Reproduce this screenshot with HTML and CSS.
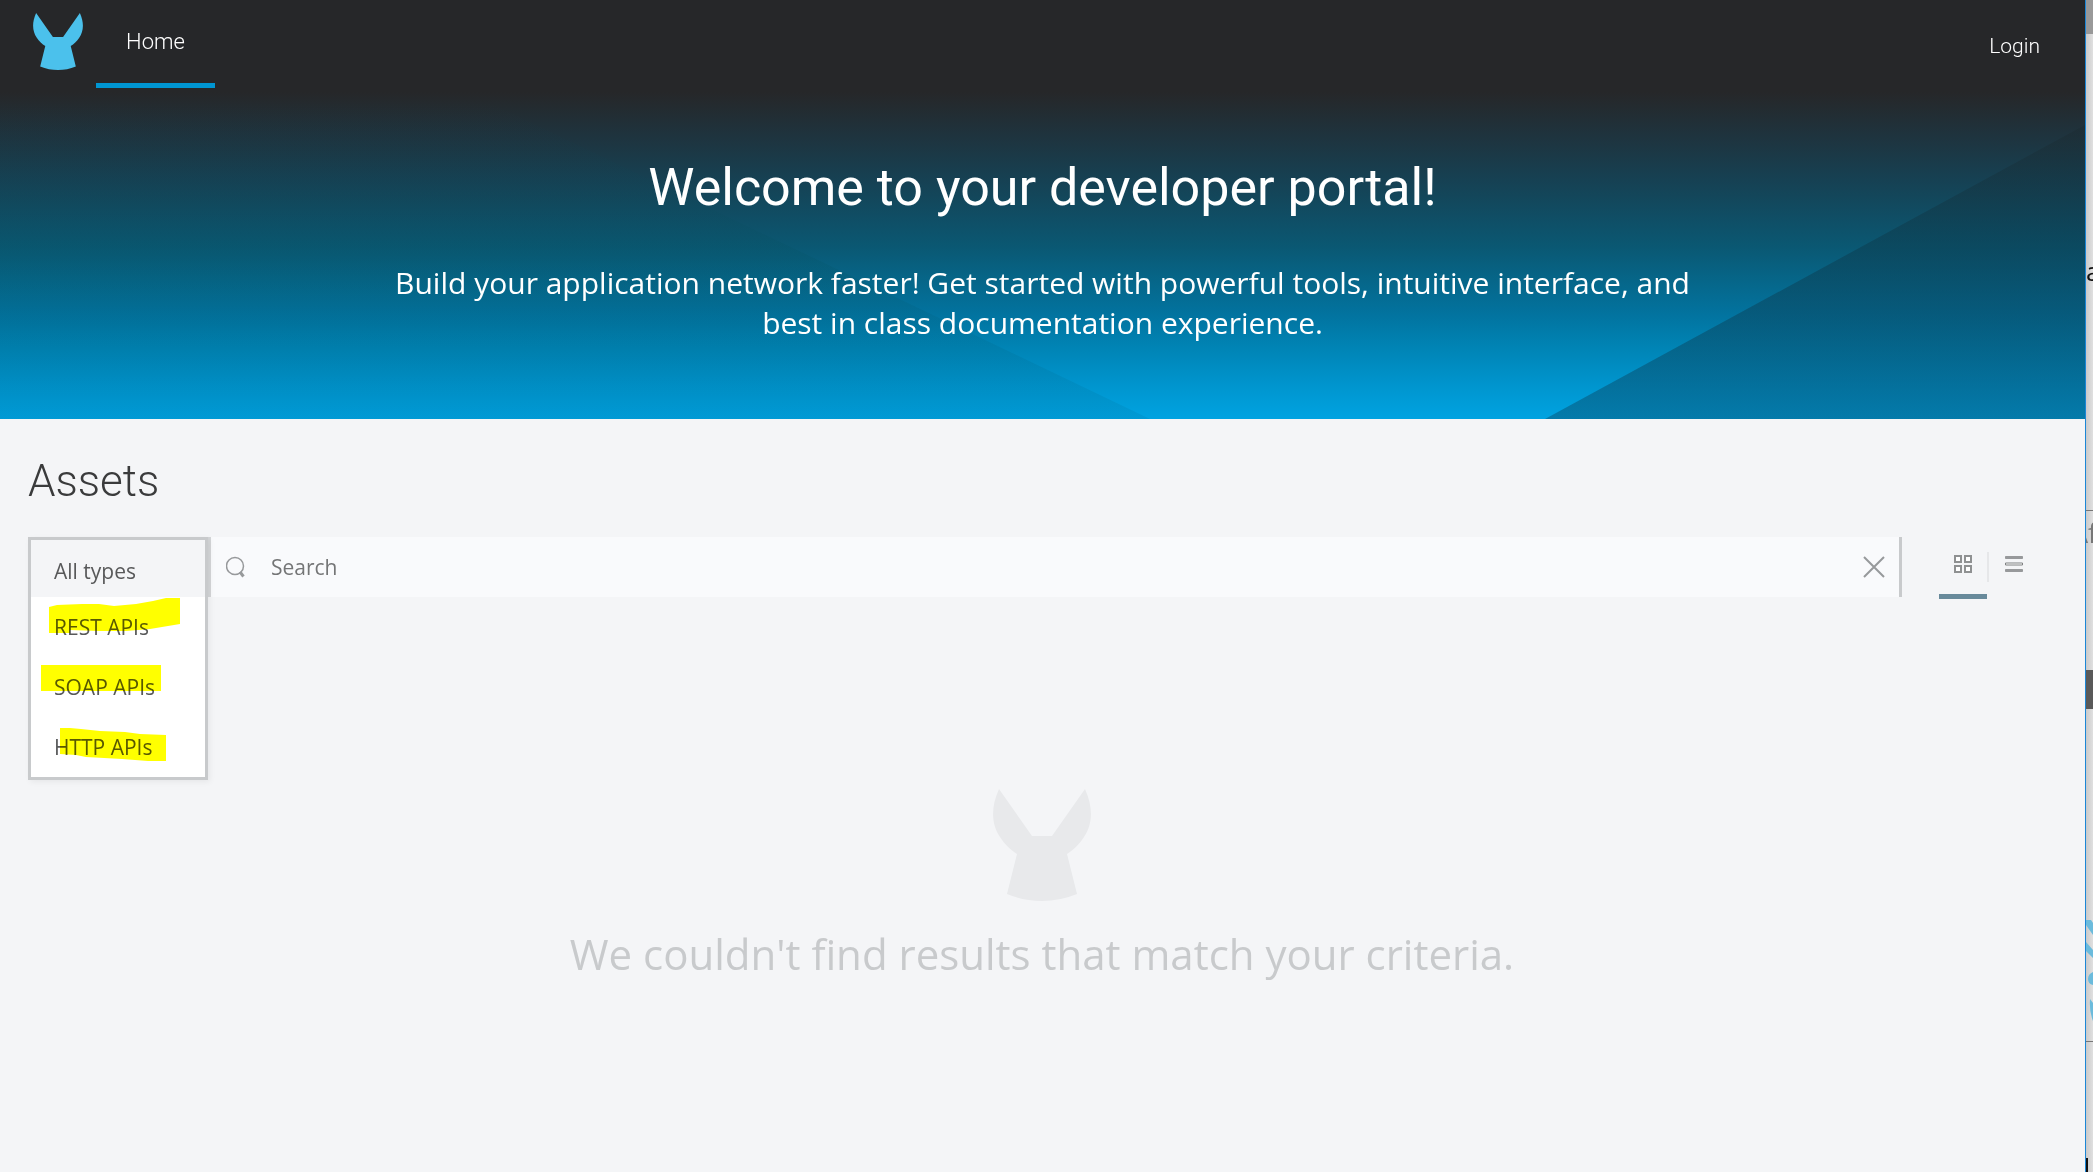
FILE: index.html
```html
<!DOCTYPE html>
<html lang="en">
<head>
<meta charset="utf-8">
<title>Developer portal</title>
<link rel="stylesheet" href="styles.css">
</head>
<body>
<svg class="defs" aria-hidden="true">
  <symbol id="mule" viewBox="0 0 98 112">
    <path d="M6 0 39 47H59L92 0C101 20 99 36 91 48 86 56 80 61 74 65L84 105Q67 112 49 112T14 105L24 65C18 61 12 56 7 48-1 36-3 20 6 0Z"/>
  </symbol>
</svg>
<div class="desktop">
  <div class="portal">
    <header class="hero">
      <svg class="hero-art" viewBox="0 0 2085 419" preserveAspectRatio="none" aria-hidden="true">
        <defs>
          <linearGradient id="sky" x1="0" y1="0" x2="0" y2="1">
            <stop offset="0" stop-color="#262729"/>
            <stop offset=".22" stop-color="#262729"/>
            <stop offset=".33" stop-color="#1e343f"/>
            <stop offset=".43" stop-color="#164153"/>
            <stop offset=".59" stop-color="#0a5873"/>
            <stop offset=".67" stop-color="#066689"/>
            <stop offset=".75" stop-color="#02739f"/>
            <stop offset=".83" stop-color="#0084b5"/>
            <stop offset=".92" stop-color="#0095ce"/>
            <stop offset="1" stop-color="#00a3e1"/>
          </linearGradient>
          <linearGradient id="shade" gradientUnits="userSpaceOnUse" x1="0" y1="125" x2="0" y2="419">
            <stop offset="0" stop-color="#1d2a30" stop-opacity=".5"/>
            <stop offset=".4" stop-color="#0c3d50" stop-opacity=".55"/>
            <stop offset="1" stop-color="#084b6b" stop-opacity=".46"/>
          </linearGradient>
          <linearGradient id="tint" gradientUnits="userSpaceOnUse" x1="0" y1="100" x2="0" y2="419">
            <stop offset="0" stop-color="#004a60" stop-opacity="0"/>
            <stop offset=".5" stop-color="#004a50" stop-opacity=".12"/>
            <stop offset="1" stop-color="#005a80" stop-opacity=".12"/>
          </linearGradient>
        </defs>
        <path fill="url(#sky)" d="M0 0H2085V419H0Z"/>
        <path fill="url(#tint)" d="M0 0H275L1150 419H0Z"/>
        <path fill="url(#shade)" d="M2085 125V419H1545Z"/>
      </svg>
      <nav class="topbar">
        <a class="brand" href="#" aria-label="Portal home"><svg class="brand-logo"><use href="#mule"/></svg></a>
        <a class="tab" href="#">Home</a>
        <a class="login" href="#">Login</a>
      </nav>
      <div class="welcome">
        <h1>Welcome to your developer portal!</h1>
        <p>Build your application network faster! Get started with powerful tools, intuitive interface, and best in class documentation experience.</p>
      </div>
    </header>
    <main class="assets">
      <h2>Assets</h2>
      <div class="toolbar">
        <div class="types">
          <ul class="menu">
            <li><button type="button" class="item current">All types</button></li>
            <li><button type="button" class="item">REST APIs</button></li>
            <li><button type="button" class="item">SOAP APIs</button></li>
            <li><button type="button" class="item">HTTP APIs</button></li>
          </ul>
          <svg class="marker" viewBox="0 0 180 243" aria-hidden="true">
            <path d="M21 70 29 68 54 67 71 67 86 69 108 67 125 64 138 61H152V87L140 89 122 92 98 94H71L42 93V96H21Z"/>
            <path d="M13 128H133V154H13Z"/>
            <path d="M32 191H42L53 192 72 194 97 195 112 197 138 198V224H120L107 223 94 222 58 220 48 218 32 217Z"/>
          </svg>
        </div>
        <form class="search">
          <svg class="lens" viewBox="0 0 20 22" aria-hidden="true"><circle cx="9" cy="10" r="8.500"/><path d="m14 16 3.500 4.500"/></svg>
          <input type="search" aria-label="Search assets" placeholder="Search">
          <button type="button" class="clear" aria-label="Clear search"><svg viewBox="0 0 22 22"><path d="m1 1 20 20M21 1 1 21"/></svg></button>
        </form>
        <div class="views">
          <button type="button" class="view active" aria-label="Grid view"><svg viewBox="0 0 18 18"><path d="M1 1h6v6H1zM11 1h6v6h-6zM1 11h6v6H1zM11 11h6v6h-6z"/></svg></button>
          <button type="button" class="view" aria-label="List view"><svg class="list" viewBox="0 0 18 18"><path class="bar" d="M.500 1.500h17v2H.500zM.500 14.500h17v2H.500z"/><path d="M.500 8h17v2H.500z"/></svg></button>
        </div>
      </div>
      <div class="empty">
        <svg class="empty-logo" aria-hidden="true"><use href="#mule"/></svg>
        <p>We couldn't find results that match your criteria.</p>
      </div>
    </main>
  </div>
  <aside class="behind" aria-hidden="true">
    <svg width="7" height="1172" viewBox="0 0 7 1172">
      <path fill="#999" d="M0 0H7V34H0Z"/>
      <text x="0" y="281" font-size="26" fill="#111">a</text>
      <path fill="#777" d="M0 510H7V511H0ZM0 1041H7V1042H0Z"/>
      <text x="-15" y="543" font-size="27" fill="#777">Af</text>
      <path fill="#595959" d="M0 670H7V709H0Z"/>
      <path fill="#6bbbdc" d="M0 920H5L7 923V935L0 925ZM0 942 7 950V958L0 951ZM7 972Q2 974 2 979T7 985ZM4 999 7 1003V1021Q3 1011 4 999Z"/>
      <path fill="#111" d="M0 1158H2V1172H0Z"/>
    </svg>
  </aside>
</div>
</body>
</html>
```
FILE: styles.css
```css
* { box-sizing: border-box; }

body {
  margin: 0;
  font-family: "Open Sans", "Noto Sans", sans-serif;
  color: #58595a;
  background: #f4f5f7;
}

h1, h2, p, ul { margin: 0; padding: 0; }
ul { list-style: none; }
a { color: inherit; text-decoration: none; }
button { font: inherit; color: inherit; background: none; border: 0; padding: 0; }
svg { display: block; }
.defs { position: absolute; width: 0; height: 0; }

.desktop {
  display: grid;
  grid-template-columns: 1fr 8px;
  min-height: 100vh;
}

.portal { min-width: 0; }

.behind {
  border-left: 1px solid #1b86d6;
  background: linear-gradient(90deg, #cacaca, #e0e0e0);
  overflow: hidden;
}

/* Hero */
.hero {
  position: relative;
  padding-bottom: 76px;
  color: #fff;
  background: #262729;
}

.hero-art {
  position: absolute;
  inset: 0;
  width: 100%;
  height: 100%;
}

.topbar {
  position: relative;
  display: flex;
  align-items: flex-start;
  height: 88px;
  padding: 0 45px 0 33px;
  font-family: Roboto, sans-serif;
  font-weight: 300;
}

.brand { padding: 13px 13px 0 0; }
.brand-logo { width: 50px; height: 57px; fill: #4bc1ec; }

.tab {
  height: 88px;
  width: 119px;
  line-height: 83px;
  text-align: center;
  font-size: 22px;
  border-bottom: 5px solid #0096d2;
}

.login {
  margin-left: auto;
  line-height: 92px;
  font-size: 21px;
}

.welcome {
  position: relative;
  display: flex;
  flex-direction: column;
  align-items: center;
  gap: 43px;
  padding: 68px 24px 0;
  text-align: center;
}

.welcome h1 {
  font: 400 52px/64px Roboto, sans-serif;
}

.welcome p {
  max-width: 1340px;
  font-size: 30px;
  line-height: 40px;
}

/* Assets */
.assets { padding: 30px 45px 0 28px; }

.assets h2 {
  font: 300 44px/64px Roboto, sans-serif;
  color: #3a3b3c;
}

.toolbar {
  display: flex;
  height: 60px;
  margin-top: 24px;
}

.types {
  position: relative;
  flex: 0 0 180px;
  font-size: 21px;
}

.menu {
  position: absolute;
  top: 0;
  left: 0;
  width: 100%;
  border: 3px solid #c8cacc;
  background: #fff;
  box-shadow: 2px 2px 6px rgba(0, 0, 0, .06);
}

.item {
  display: block;
  width: 100%;
  height: 60px;
  padding-left: 23px;
  text-align: left;
}

.item.current {
  height: 57px;
  padding-top: 4px;
  background: #f4f5f7;
}

.marker {
  position: absolute;
  top: 0;
  left: 0;
  width: 180px;
  height: 243px;
  fill: #ff0;
  mix-blend-mode: multiply;
  pointer-events: none;
}

.search {
  flex: 1;
  display: flex;
  align-items: center;
  padding: 0 14px 0 15px;
  background: #f9fafc;
  border: solid #c8cacc;
  border-width: 0 3px;
  border-left-color: #d4d6d8;
}

.lens {
  width: 20px;
  height: 22px;
  fill: none;
  stroke: #97999b;
  stroke-width: 1.500;
}
.lens path { stroke-width: 3; }

.search input {
  flex: 1;
  min-width: 0;
  height: 60px;
  padding: 0 0 0 25px;
  border: 0;
  background: none;
  font: 21px "Open Sans", sans-serif;
}
.search input::placeholder { color: #747576; }

.clear svg { width: 22px; height: 22px; fill: none; stroke: #97999b; stroke-width: 2; }

.views {
  display: flex;
  padding-left: 37px;
}

.view {
  display: flex;
  justify-content: center;
  width: 48px;
  height: 62px;
  padding-top: 18px;
}
.view svg { width: 18px; height: 18px; fill: #fff; stroke: #7f8182; }
.view.active svg { stroke-width: 2; stroke: #8f9192; }
.view .bar { fill: #97999b; stroke: #97999b; }
.view.active { border-bottom: 5px solid #688a9b; }
.view + .view {
  width: 53px;
  background: linear-gradient(#e6e7e9, #e6e7e9) 0 15px / 2px 30px no-repeat;
}

.empty {
  display: flex;
  flex-direction: column;
  align-items: center;
  gap: 23px;
  padding: 192px 0 0 16px;
  text-align: center;
  color: #c8cacc;
  font-size: 42px;
  line-height: 60px;
}
.empty-logo { width: 98px; height: 112px; fill: #e8e9eb; }

.behind text { font-family: "Open Sans", sans-serif; }
```
